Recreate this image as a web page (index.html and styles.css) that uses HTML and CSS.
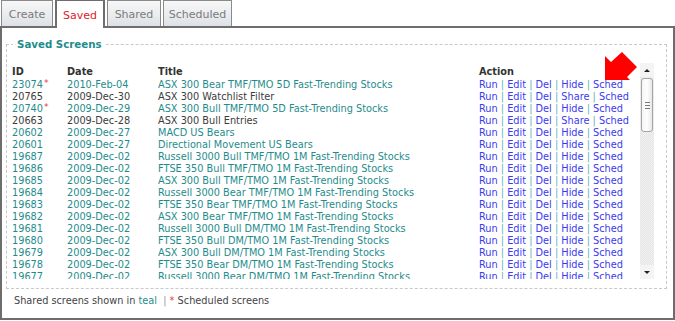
FILE: index.html
```html
<!DOCTYPE html>
<html>
<head>
<meta charset="utf-8">
<link rel="stylesheet" href="styles.css">
</head>
<body>
<div class="page">
  <div class="tabs">
    <div class="tab t-create">Create</div>
    <div class="tab t-saved active">Saved</div>
    <div class="tab t-shared">Shared</div>
    <div class="tab t-sched">Scheduled</div>
  </div>
  <div class="panel">
    <fieldset class="box">
      <legend>Saved Screens</legend>
      <div class="scroller">
        <div class="list">
          <div class="row head"><span>ID</span><span>Date</span><span>Title</span><span>Action</span></div>
          <div class="row teal"><span>23074<b class="star">*</b></span><span>2010-Feb-04</span><span>ASX 300 Bear TMF/TMO 5D Fast-Trending Stocks</span><span class="act">Run <i>|</i> Edit <i>|</i> Del <i>|</i> Hide <i>|</i> Sched</span></div>
          <div class="row"><span>20765</span><span>2009-Dec-30</span><span>ASX 300 Watchlist Filter</span><span class="act">Run <i>|</i> Edit <i>|</i> Del <i>|</i> Share <i>|</i> Sched</span></div>
          <div class="row teal"><span>20740<b class="star">*</b></span><span>2009-Dec-29</span><span>ASX 300 Bull TMF/TMO 5D Fast-Trending Stocks</span><span class="act">Run <i>|</i> Edit <i>|</i> Del <i>|</i> Hide <i>|</i> Sched</span></div>
          <div class="row"><span>20663</span><span>2009-Dec-28</span><span>ASX 300 Bull Entries</span><span class="act">Run <i>|</i> Edit <i>|</i> Del <i>|</i> Share <i>|</i> Sched</span></div>
          <div class="row teal"><span>20602</span><span>2009-Dec-27</span><span>MACD US Bears</span><span class="act">Run <i>|</i> Edit <i>|</i> Del <i>|</i> Hide <i>|</i> Sched</span></div>
          <div class="row teal"><span>20601</span><span>2009-Dec-27</span><span>Directional Movement US Bears</span><span class="act">Run <i>|</i> Edit <i>|</i> Del <i>|</i> Hide <i>|</i> Sched</span></div>
          <div class="row teal"><span>19687</span><span>2009-Dec-02</span><span>Russell 3000 Bull TMF/TMO 1M Fast-Trending Stocks</span><span class="act">Run <i>|</i> Edit <i>|</i> Del <i>|</i> Hide <i>|</i> Sched</span></div>
          <div class="row teal"><span>19686</span><span>2009-Dec-02</span><span>FTSE 350 Bull TMF/TMO 1M Fast-Trending Stocks</span><span class="act">Run <i>|</i> Edit <i>|</i> Del <i>|</i> Hide <i>|</i> Sched</span></div>
          <div class="row teal"><span>19685</span><span>2009-Dec-02</span><span>ASX 300 Bull TMF/TMO 1M Fast-Trending Stocks</span><span class="act">Run <i>|</i> Edit <i>|</i> Del <i>|</i> Hide <i>|</i> Sched</span></div>
          <div class="row teal"><span>19684</span><span>2009-Dec-02</span><span>Russell 3000 Bear TMF/TMO 1M Fast-Trending Stocks</span><span class="act">Run <i>|</i> Edit <i>|</i> Del <i>|</i> Hide <i>|</i> Sched</span></div>
          <div class="row teal"><span>19683</span><span>2009-Dec-02</span><span>FTSE 350 Bear TMF/TMO 1M Fast-Trending Stocks</span><span class="act">Run <i>|</i> Edit <i>|</i> Del <i>|</i> Hide <i>|</i> Sched</span></div>
          <div class="row teal"><span>19682</span><span>2009-Dec-02</span><span>ASX 300 Bear TMF/TMO 1M Fast-Trending Stocks</span><span class="act">Run <i>|</i> Edit <i>|</i> Del <i>|</i> Hide <i>|</i> Sched</span></div>
          <div class="row teal"><span>19681</span><span>2009-Dec-02</span><span>Russell 3000 Bull DM/TMO 1M Fast-Trending Stocks</span><span class="act">Run <i>|</i> Edit <i>|</i> Del <i>|</i> Hide <i>|</i> Sched</span></div>
          <div class="row teal"><span>19680</span><span>2009-Dec-02</span><span>FTSE 350 Bull DM/TMO 1M Fast-Trending Stocks</span><span class="act">Run <i>|</i> Edit <i>|</i> Del <i>|</i> Hide <i>|</i> Sched</span></div>
          <div class="row teal"><span>19679</span><span>2009-Dec-02</span><span>ASX 300 Bull DM/TMO 1M Fast-Trending Stocks</span><span class="act">Run <i>|</i> Edit <i>|</i> Del <i>|</i> Hide <i>|</i> Sched</span></div>
          <div class="row teal"><span>19678</span><span>2009-Dec-02</span><span>FTSE 350 Bear DM/TMO 1M Fast-Trending Stocks</span><span class="act">Run <i>|</i> Edit <i>|</i> Del <i>|</i> Hide <i>|</i> Sched</span></div>
          <div class="row teal"><span>19677</span><span>2009-Dec-02</span><span>Russell 3000 Bear DM/TMO 1M Fast-Trending Stocks</span><span class="act">Run <i>|</i> Edit <i>|</i> Del <i>|</i> Hide <i>|</i> Sched</span></div>
          <div class="row teal"><span>19676</span><span>2009-Dec-02</span><span>ASX 300 Bear DM/TMO 1M Fast-Trending Stocks</span><span class="act">Run <i>|</i> Edit <i>|</i> Del <i>|</i> Hide <i>|</i> Sched</span></div>
        </div>
        <div class="sbar">
          <div class="sbtn up"><span></span></div>
          <div class="thumb"><div class="grip"></div></div>
          <div class="track"></div>
          <div class="sbtn down"><span></span></div>
        </div>
      </div>
    </fieldset>
    <p class="note">Shared screens shown in <span class="tealtxt">teal</span> &nbsp;<span class="pipe">|</span> <b class="star2">*</b> Scheduled screens</p>
  </div>
  <svg class="arrow" width="40" height="34" viewBox="0 0 40 34">
    <polygon points="3,30 3,6 9,12 20,2 35,17 25,27 28,30" fill="#ff0000"/>
  </svg>
</div>
</body>
</html>
```
FILE: styles.css
```css
* { box-sizing: border-box; }
html, body { margin: 0; padding: 0; background: #fff; }
body {
  font-family: "DejaVu Sans", Verdana, sans-serif;
  font-size: 9.75px;
  color: #3c3c3c;
  width: 675px;
  height: 321px;
  overflow: hidden;
}
.page { position: relative; width: 675px; height: 321px; }

.tabs {
  display: flex;
  gap: 2px;
  padding-left: 1px;
  height: 26px;
  align-items: flex-end;
}
.tab {
  height: 26px;
  border: 1px solid #8a8a8a;
  border-bottom: none;
  background: linear-gradient(#f7f7f7, #e9ebee 60%, #dde1e5);
  color: #7a7a7a;
  font-size: 11px;
  display: flex;
  align-items: center;
  justify-content: center;
  padding-top: 1px;
}
.t-create { width: 52px; }
.t-saved { width: 50px; }
.t-shared { width: 54px; }
.t-sched { width: 69px; }
.tab.active {
  background: #fff;
  color: #e0202a;
  height: 28px;
  margin-bottom: -2px;
  position: relative;
  z-index: 2;
  border-color: #6d6d6d;
  border-width: 1px 2px 0 2px;
}

.panel {
  height: 294px;
  border: 2px solid #6d6d6d;
  padding: 9px 6px 0 4px;
}
.box {
  margin: 0;
  border: 1px dashed #c9c9c9;
  padding: 13px 12px 9px 4px;
  height: 252px;
}
.box legend {
  margin-left: 2px;
  padding: 0 4px;
  color: #1f8c8c;
  font-weight: bold;
  font-size: 10.25px;
  line-height: 14px;
}
.scroller {
  display: flex;
  height: 216px;
  margin-top: -1px;
}
.list {
  flex: 1;
  overflow: hidden;
  padding-left: 1px;
}
.row {
  display: grid;
  grid-template-columns: 55px 91px 321px 1fr;
  height: 12px;
  line-height: 12px;
  white-space: nowrap;
}
.row.head {
  height: 16px;
  padding-top: 3px;
  font-weight: bold;
  color: #333;
}
.row.teal { color: #1f8c8c; }
.act { color: #3a3af0; }
.act i { font-style: normal; color: #62b3b8; }
.star {
  color: #e83a3a;
  font-weight: normal;
  font-size: 9px;
  vertical-align: 2px;
  margin-left: 1px;
  line-height: 0;
}

.sbar {
  width: 14px;
  display: flex;
  flex-direction: column;
  background: repeating-conic-gradient(#f3f3f3 0 25%, #e4e4e4 0 50%) 0 0 / 2px 2px;
}
.sbtn {
  height: 14px;
  display: flex;
  align-items: center;
  justify-content: center;
  background: #f4f4f4;
}
.sbtn span {
  width: 0; height: 0;
  border-left: 3px solid transparent;
  border-right: 3px solid transparent;
}
.up span { border-bottom: 3px solid #222; }
.down span { border-top: 3px solid #222; }
.thumb {
  height: 54px;
  margin: 1px 1px 0 1px;
  border: 1px solid #a5a5a5;
  border-radius: 3px;
  background: linear-gradient(90deg, #f5f5f5, #fefefe 50%, #e8e8e8);
  display: flex;
  align-items: center;
  justify-content: center;
}
.grip {
  width: 5px;
  height: 7px;
  background: repeating-linear-gradient(#777 0 1px, transparent 1px 3px);
}
.track { flex: 1; }

.note {
  margin: 6px 0 0 8px;
  font-size: 9.75px;
  line-height: 12px;
  color: #444;
}
.tealtxt { color: #1f8c8c; }
.pipe { color: #999; }
.star2 { color: #e83a3a; font-weight: normal; }

.arrow {
  position: absolute;
  left: 602px;
  top: 50px;
}
```
